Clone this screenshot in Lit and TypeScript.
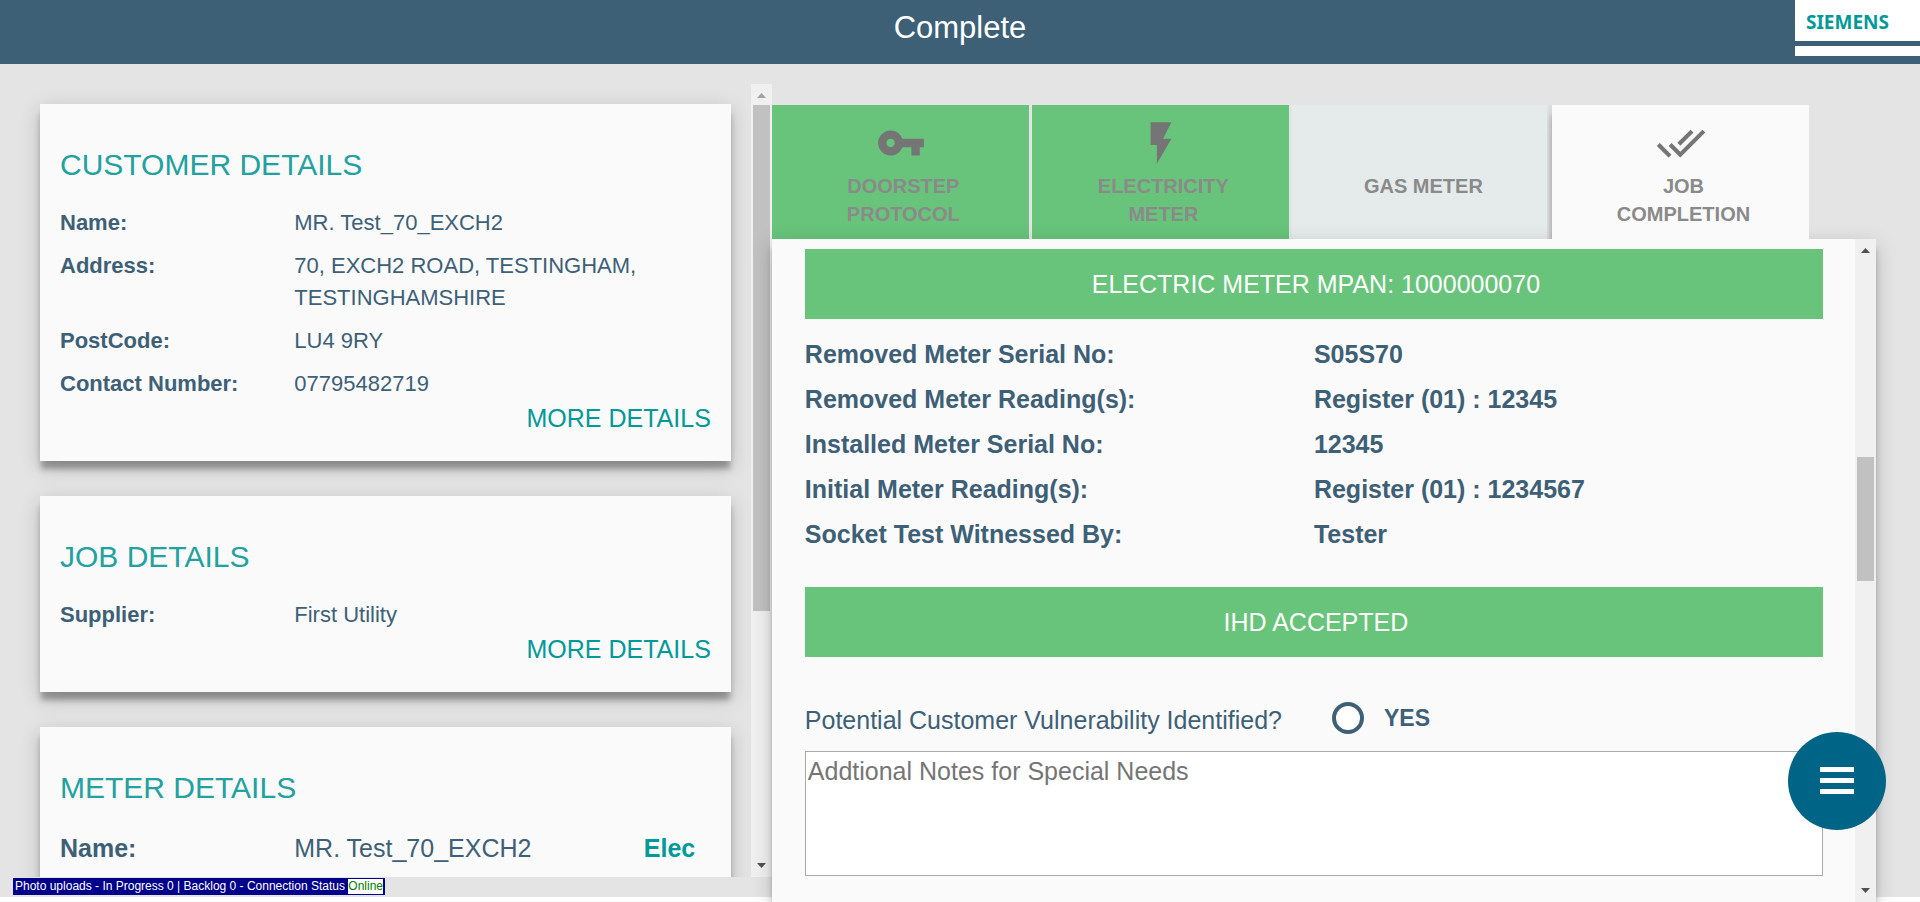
import { LitElement, html, css, svg } from "lit";
import { customElement, property } from "lit/decorators.js";

type Pair = [string, string];

const ICONS: Record<string, unknown> = {
  key: svg`<path d="M12.65 10C11.83 7.67 9.61 6 7 6c-3.31 0-6 2.69-6 6s2.69 6 6 6c2.61 0 4.83-1.67 5.65-4H17v4h4v-4h2v-4H12.65zM7 14c-1.1 0-2-.9-2-2s.9-2 2-2 2 .9 2 2-.9 2-2 2z"/>`,
  flash: svg`<path d="M7 2v11h3v9l7-12h-4l4-8z"/>`,
  done: svg`<path d="M18 7l-1.41-1.41-6.34 6.34 1.41 1.41L18 7zm4.24-1.41L11.66 16.17 7.48 12l-1.41 1.41L11.66 19l12-12-1.42-1.41zM.41 13.41L6 19l1.41-1.41L1.83 12 .41 13.41z"/>`,
  none: svg``,
};

const cardStyles = css`
  .card {
    padding: 44px 20px 16px;
    background: #fafafa;
  }
  .raised {
    box-shadow: 0 9px 6px -1px rgba(0, 0, 0, 0.3), 0 6px 20px rgba(0, 0, 0, 0.19);
  }
  .card h2 {
    margin: 0 0 25px;
    font-size: 30px;
    line-height: 34px;
    font-weight: 400;
    color: #21a1a0;
  }
`;

/** Decorative scrollbar; `start` and `size` are percentages of the track. */
@customElement("scroll-rail")
export class ScrollRail extends LitElement {
  @property({ type: Number }) start = 0;
  @property({ type: Number }) size = 50;

  static styles = css`
    :host {
      display: flex;
      flex-direction: column;
      flex: none;
      width: 21px;
      background: #f0f0f0;
    }
    .arrow {
      display: block;
      flex: none;
      width: 21px;
      height: 21px;
      fill: #505050;
    }
    .dim {
      fill: #a3a3a3;
    }
    .track {
      flex: 1;
      min-height: 0;
      padding: 0 2px;
    }
    .thumb {
      background: #c1c1c1;
    }
  `;

  render() {
    return html`
      <svg class="arrow ${this.start === 0 ? "dim" : ""}" viewBox="0 0 21 21" aria-hidden="true">
        <path d="M6 14l4.500-5 4.500 5z" />
      </svg>
      <div class="track">
        <div style="height:${this.start}%"></div>
        <div class="thumb" style="height:${this.size}%"></div>
      </div>
      <svg class="arrow" viewBox="0 0 21 21" aria-hidden="true">
        <path d="M6 7l4.500 5 4.500-5z" />
      </svg>
    `;
  }
}

@customElement("detail-card")
export class DetailCard extends LitElement {
  @property() heading = "";
  @property({ attribute: false }) rows: Pair[] = [];

  static styles = [
    cardStyles,
    css`
      :host {
        display: block;
        flex: none;
      }
      dl {
        display: grid;
        grid-template-columns: 36% 1fr;
        row-gap: 11px;
        margin: 0;
        font-size: 22px;
        line-height: 32px;
      }
      dt {
        font-weight: 700;
      }
      dd {
        margin: 0;
        white-space: pre-line;
      }
      .more {
        display: block;
        width: fit-content;
        margin: 0 0 0 auto;
        font-size: 25px;
        line-height: 36px;
        color: #009999;
        text-decoration: none;
      }
      .foot {
        padding-bottom: 9px;
      }
    `,
  ];

  render() {
    return html`
      <section class="card raised">
        <h2>${this.heading}</h2>
        <dl>
          ${this.rows.map(([k, v]) => html`<dt>${k}</dt><dd>${v}</dd>`)}
        </dl>
        <div class="foot"><a class="more" href="#more">MORE DETAILS</a></div>
      </section>
    `;
  }
}

@customElement("app-root")
export class AppRoot extends LitElement {
  private customer: Pair[] = [
    ["Name:", "MR. Test_70_EXCH2"],
    ["Address:", "70, EXCH2 ROAD, TESTINGHAM,\nTESTINGHAMSHIRE"],
    ["PostCode:", "LU4 9RY"],
    ["Contact Number:", "07795482719"],
  ];
  private job: Pair[] = [["Supplier:", "First Utility"]];
  private meter: Pair[] = [
    ["Removed Meter Serial No:", "S05S70"],
    ["Removed Meter Reading(s):", "Register (01) : 12345"],
    ["Installed Meter Serial No:", "12345"],
    ["Initial Meter Reading(s):", "Register (01) : 1234567"],
    ["Socket Test Witnessed By:", "Tester"],
  ];
  private tabs = [
    { icon: "key", label: "DOORSTEP\nPROTOCOL", state: "done" },
    { icon: "flash", label: "ELECTRICITY\nMETER", state: "done" },
    { icon: "none", label: "GAS METER", state: "idle" },
    { icon: "done", label: "JOB\nCOMPLETION", state: "current raised" },
  ];

  static styles = [
    cardStyles,
    css`
      :host {
        display: flex;
        flex-direction: column;
        height: 100vh;
        overflow: hidden;
        position: relative;
        font-family: "Liberation Sans", Arial, sans-serif;
        color: #3d6077;
        background: #fff;
      }
      .header {
        display: grid;
        grid-template-columns: 1fr auto 1fr;
        flex: none;
        height: 64px;
        background: #3d6077;
      }
      .header h1 {
        grid-column: 2;
        margin: 0;
        font-size: 31px;
        line-height: 56px;
        font-weight: 400;
        color: #fff;
      }
      .logo {
        justify-self: end;
        width: 125px;
        height: 56px;
        background: #fff;
      }
      .brand {
        display: block;
        height: 41px;
        padding-left: 11px;
        font: 700 19px/44px "Noto Sans", sans-serif;
        color: #009999;
      }
      .stripe {
        height: 5px;
        background: #3d6077;
      }
      .body {
        display: flex;
        flex: 1;
        min-height: 0;
        background: linear-gradient(#e4e4e4, #e4e4e4) top / 100% calc(100% - 5px) no-repeat;
      }
      .side {
        display: flex;
        flex-direction: column;
        width: 40.2%;
        padding-top: 20px;
      }
      .scroller {
        display: flex;
        flex: 1;
        min-height: 0;
        overflow: hidden;
      }
      .cards {
        display: flex;
        flex: 1;
        flex-direction: column;
        gap: 35px;
        min-width: 0;
        padding: 20px 20px 0 40px;
        overflow: hidden;
      }
      .meter {
        flex: none;
      }
      .meter-row {
        display: grid;
        grid-template-columns: 36% 1fr 67px;
        font-size: 25px;
        line-height: 36px;
        padding-bottom: 20px;
      }
      .fuel {
        color: #009999;
      }
      .status-row {
        display: flex;
        flex: none;
        align-items: flex-start;
        height: 25px;
        padding-left: 13px;
      }
      .status {
        margin-top: 1px;
        padding: 1px 2px;
        background: #00008b;
        color: #fff;
        font-size: 12px;
        line-height: 15px;
      }
      .online {
        display: inline-block;
        background: #fff;
        color: #008000;
      }
      .main {
        display: flex;
        flex: 1;
        flex-direction: column;
        min-width: 0;
        padding: 41px 44px 0 0;
      }
      .tabs {
        display: grid;
        grid-template-columns: repeat(4, 1fr);
        gap: 3px;
        flex: none;
        height: 134px;
        margin-right: 67px;
      }
      .tab {
        display: flex;
        flex-direction: column;
        align-items: center;
        margin: 0;
        padding: 13px 0 0 2px;
        border: 0;
        font: 700 20px/28px "Liberation Sans", Arial, sans-serif;
        color: #8a8a8a;
      }
      .tab.done {
        background: #68c47a;
      }
      .tab.idle {
        background: #e4ebea;
      }
      .tab.current {
        background: #fafafa;
        clip-path: inset(0 0 0 -5px);
      }
      .tab svg {
        width: 50px;
        height: 50px;
        margin-bottom: 4px;
        fill: #757575;
      }
      .tab span {
        padding-left: 4px;
        white-space: pre-line;
      }
      .panel {
        display: flex;
        flex: 1;
        min-height: 0;
        background: #fafafa;
      }
      .content {
        flex: 1;
        min-width: 0;
        padding: 10px 32px 0 33px;
        overflow: hidden;
        font-size: 25px;
      }
      .banner {
        margin: 0;
        padding-left: 4px;
        font-size: 25px;
        line-height: 70px;
        font-weight: 400;
        text-align: center;
        color: #fff;
        background: #68c47a;
      }
      .readings {
        display: grid;
        grid-template-columns: 1fr 1fr;
        margin: 13px 0 30px;
        font-weight: 700;
        line-height: 45px;
      }
      .readings dd {
        margin: 0;
      }
      .question {
        display: flex;
        align-items: flex-start;
        margin: 45px 0 13px;
        line-height: 36px;
      }
      .option {
        display: flex;
        align-items: center;
        gap: 20px;
        margin-left: 50px;
        font-size: 23px;
        font-weight: 700;
        line-height: 32px;
      }
      .option input {
        appearance: none;
        box-sizing: border-box;
        width: 32px;
        height: 32px;
        margin: 0;
        border: 4px solid #3d6077;
        border-radius: 50%;
        background: #fff;
      }
      .notes {
        display: block;
        box-sizing: border-box;
        width: 100%;
        height: 125px;
        margin: 0;
        padding: 4px 2px;
        border: 1px solid #a9a9a9;
        border-radius: 0;
        resize: none;
        background: #fff;
        font: 25px/30px "Liberation Sans", Arial, sans-serif;
      }
      .notes::placeholder {
        color: #757575;
      }
      .fab {
        position: absolute;
        right: 34px;
        bottom: 72px;
        width: 98px;
        height: 98px;
        padding: 0;
        border: 0;
        border-radius: 50%;
        background: #006487;
      }
      .fab svg {
        display: block;
        width: 36px;
        height: 28px;
        margin: auto;
        fill: #fff;
      }
    `,
  ];

  render() {
    return html`
      <header class="header">
        <h1>Complete</h1>
        <div class="logo">
          <span class="brand">SIEMENS</span>
          <div class="stripe"></div>
        </div>
      </header>
      <div class="body">
        <aside class="side">
          <div class="scroller">
            <div class="cards">
              <detail-card heading="CUSTOMER DETAILS" .rows=${this.customer}></detail-card>
              <detail-card heading="JOB DETAILS" .rows=${this.job}></detail-card>
              <section class="meter card raised">
                <h2>METER DETAILS</h2>
                <div class="meter-row">
                  <strong>Name:</strong>
                  <span>MR. Test_70_EXCH2</span>
                  <strong class="fuel">Elec</strong>
                </div>
              </section>
            </div>
            <scroll-rail .start=${0} .size=${67.4}></scroll-rail>
          </div>
          <div class="status-row">
            <div class="status">Photo uploads - In Progress 0 | Backlog 0 - Connection Status <span class="online">Online</span></div>
          </div>
        </aside>
        <main class="main">
          <nav class="tabs">
            ${this.tabs.map(
              (t) => html`<button class="tab ${t.state}" type="button">
                <svg viewBox="0 0 24 24" aria-hidden="true">${ICONS[t.icon]}</svg>
                <span>${t.label}</span>
              </button>`
            )}
          </nav>
          <section class="panel raised">
            <div class="content">
              <h2 class="banner">ELECTRIC METER MPAN: 1000000070</h2>
              <dl class="readings">
                ${this.meter.map(([k, v]) => html`<dt>${k}</dt><dd>${v}</dd>`)}
              </dl>
              <h2 class="banner">IHD ACCEPTED</h2>
              <div class="question">
                <span id="vulnerable">Potential Customer Vulnerability Identified?</span>
                <label class="option"><input type="radio" name="vulnerable" aria-describedby="vulnerable" />YES</label>
              </div>
              <textarea class="notes" aria-label="Additional notes" placeholder="Addtional Notes for Special Needs"></textarea>
            </div>
            <scroll-rail .start=${31.7} .size=${20}></scroll-rail>
          </section>
        </main>
      </div>
      <button class="fab" type="button" aria-label="Menu">
        <svg viewBox="0 0 36 28" aria-hidden="true">
          <path d="M1 0h34v5H1zM1 11h34v5H1zM1 22h34v5H1z" />
        </svg>
      </button>
    `;
  }
}
